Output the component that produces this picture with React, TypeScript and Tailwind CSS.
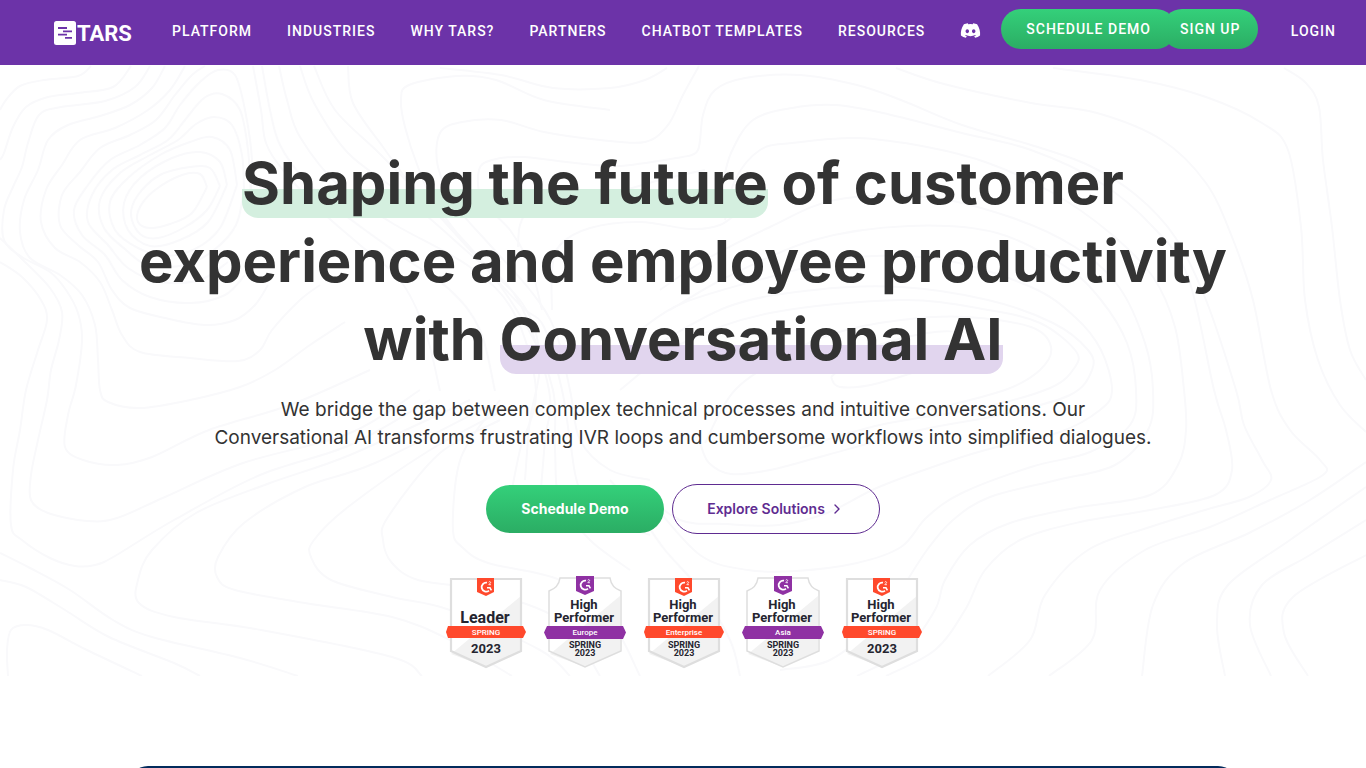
import { FaDiscord } from "react-icons/fa";
import { ChevronRight } from "lucide-react";

const NAV_ITEMS = ["PLATFORM", "INDUSTRIES", "WHY TARS?", "PARTNERS", "CHATBOT TEMPLATES", "RESOURCES"];

/* Contour lines of the hero background, each a list of x,y points. */
const CONTOURS = [
  "91,66 78,76 44,80 20,86 6,100 0,110",
  "131,66 113,87 78,93 48,97 26,107 13,127 4,153 0,160",
  "150,66 135,87 105,101 61,107 39,115 28,143 22,167 13,187 4,210 4,240 22,257 50,272 66,290 78,313 82,340 76,385 68,415 65,447 83,460 117,465 152,457 209,430 290,405 370,370",
  "165,66 152,88 130,105 100,116 68,125 48,140 38,170 24,200 20,232 30,258 60,275 82,295 95,325 98,360 100,390 108,402 140,408 190,400 240,387 275,370 310,345 345,322",
  "185,66 170,90 148,110 115,128 80,140 62,165 46,190 41,222 55,248 80,262 100,282 112,310 122,335 140,352 190,358 238,361 260,350 272,330 300,300 320,285",
  "205,66 192,75 175,95 156,120 130,135 100,148 80,172 62,195 60,225 78,245 98,262 112,290 130,308 165,318 205,325 235,320 255,305 268,285",
  "250,200 252,160 245,110 235,75 218,70 200,82 180,105 165,128 140,145 110,160 88,185 74,210 82,235 105,255 122,280 150,297 190,303 225,295 245,275",
  "251,200 248,150 240,110 222,94 204,98 185,120 168,140 140,155 112,170 92,195 88,222 108,245 128,268 160,282 200,280 228,262",
  "244,190 242,155 232,125 214,117 196,124 178,140 150,155 120,173 100,200 104,228 126,250 148,265 185,265 214,250 236,225 244,190",
  "237,185 230,150 212,137 190,142 160,155 128,178 110,202 115,230 138,248 165,256 195,249 220,228 237,185",
  "227,185 220,162 200,152 172,158 140,178 124,203 128,230 150,246 180,240 208,222 227,185",
  "220,186 210,168 190,167 160,175 138,195 131,215 140,234 158,238 185,227 207,210 220,186",
  "207,187 200,174 182,175 155,190 140,207 138,222 150,228 170,224 192,213 207,187",
  "253,66 261,110 266,143 283,170 320,210 360,245 400,280 425,330 440,391",
  "262,66 270,110 280,145 305,180 345,215 400,255 450,290 480,330 495,391",
  "279,66 287,100 300,137 340,187 392,223 470,267 514,313 536,391 520,450 510,500",
  "300,66 314,103 348,153 400,193 462,247 522,303 540,360 530,420 525,480",
  "314,66 335,110 379,153 418,193 470,250 518,300 549,390 545,440 540,500",
  "348,66 353,103 383,147 418,193 475,253 527,327 553,390 555,450 560,500 590,540 630,570",
  "610,110 544,100 496,80 457,76 409,85 401,100 405,127 418,167 435,203 479,260 522,307 544,327 562,390 570,440 580,490 610,520 650,535",
  "440,68 501,75 553,88 610,88 645,80 667,68",
  "699,66 683,95 668,125 645,142 600,140 544,132 501,120 462,122 440,133 438,167 457,207 490,245 530,290 555,330 570,390 580,440 610,470 650,480",
  "683,157 620,166 575,163 523,157 492,160 479,170 482,200 510,230 530,265 542,310",
  "518,247 520,225 530,208 557,193 610,193 660,180 705,170",
  "552,310 552,270 560,245 590,228 640,222 690,229 720,225 740,210",
  "0,262 22,277 41,300 47,320 38,350 26,390 20,430 13,470 11,525 22,540 50,558 75,566 95,565 115,556 174,520 260,475 350,445 430,400",
  "0,238 25,262 50,288 62,312 59,340 51,370 47,400 38,440 31,475 31,500 48,513 87,521 117,518 165,497 243,463 350,433 420,390",
  "0,553 30,568 70,590 113,620 152,637 240,658 298,676",
  "0,580 26,587 65,610 109,637 174,663 200,676",
  "8,676 7,650 11,630 26,625 48,630 87,650 142,676",
  "470,400 350,455 270,483 196,513 152,550 138,580 139,603 174,617 261,630 392,657 422,676",
  "490,405 375,463 305,487 244,523 218,557 217,577 235,590 305,603 392,617 450,640 512,676",
  "500,412 430,450 348,507 314,540 311,557 331,580 392,597 450,610 540,650 570,676",
  "500,420 440,453 388,517 383,540 392,563 418,580 479,590 560,620 600,676",
  "500,400 470,440 457,473 453,530 462,547 488,563 560,580 610,620 640,676",
  "610,480 640,515 665,550 700,590 730,640 740,676",
  "640,490 680,520 726,524 779,525 827,513 879,487 953,460 997,447 1060,432 1100,410 1112,390 1101,350 1075,317 1031,287 944,260 857,257 770,277 683,303 640,330",
  "650,500 700,555 748,570 796,571 857,563 901,547 927,517 962,493 1031,467 1090,452 1130,425 1136,390 1127,343 1101,300 1066,267 997,233 909,226 814,240 727,277 670,310",
  "780,670 830,660 880,620 901,590 927,550 953,520 990,497 1057,480 1115,465 1148,430 1153,390 1145,343 1119,287 1075,247 1010,217 927,197 835,200 770,227 705,260 660,290",
  "857,676 905,650 935,610 945,580 970,545 1010,523 1075,508 1150,495 1178,465 1186,430 1184,390 1175,327 1153,277 1110,233 1053,193 988,163 927,147 857,138 792,143 760,150 735,180 725,220",
  "886,676 935,650 965,610 985,570 1020,540 1080,522 1150,510 1215,495 1232,470 1226,430 1214,390 1188,277 1153,227 1101,183 1031,150 962,133 883,113 835,105 792,108 753,120 731,153 722,187",
  "988,676 1030,640 1045,595 1088,550 1150,527 1205,510 1249,497 1271,480 1262,460 1244,425 1236,390 1206,300 1175,237 1136,195 1088,165 1031,145 962,125 901,100 857,85 800,75 745,78 715,90 703,115 698,150 683,157",
  "1049,676 1092,640 1100,590 1145,550 1210,527 1270,500 1323,475 1320,460 1290,430 1271,390 1253,300 1232,237 1206,183 1162,140 1097,113 1031,103 944,84 896,68",
  "1142,676 1153,605 1184,563 1249,533 1310,500 1366,462",
  "1225,676 1217,625 1228,585 1290,540 1366,487",
  "1271,676 1250,625 1262,585 1310,555 1366,520",
  "1308,676 1284,633 1293,597 1366,555",
  "1053,68 1140,80 1206,97 1262,123 1288,150 1301,227 1305,300 1318,360 1340,405 1366,432",
  "1284,68 1306,83 1319,107 1323,160 1332,227 1340,300 1350,350 1366,380",
  "640,355 727,307 814,290 901,287 988,300 1053,323 1088,350 1092,370 1070,395 1000,415 920,430 827,455 770,470 731,474 709,463 700,443",
  "620,390 683,343 770,313 901,300 988,310 1040,323 1075,350 1075,367 1050,388 980,408 880,425 800,448",
  "705,443 735,390 790,353 835,333 901,320 966,317 1031,327 1051,347 1040,370 1005,390 930,410",
  "831,377 866,350 927,333 962,335 944,360 879,383 840,387 831,377",
];

function smoothPath(list: string): string {
  const pts = list.split(" ").map((p) => p.split(",").map(Number));
  let d = `M${pts[0][0]} ${pts[0][1]}`;
  for (let i = 0; i < pts.length - 1; i++) {
    const p0 = pts[i - 1] ?? pts[i];
    const p1 = pts[i];
    const p2 = pts[i + 1];
    const p3 = pts[i + 2] ?? p2;
    d += `C${p1[0] + (p2[0] - p0[0]) / 6} ${p1[1] + (p2[1] - p0[1]) / 6} ${p2[0] - (p3[0] - p1[0]) / 6} ${p2[1] - (p3[1] - p1[1]) / 6} ${p2[0]} ${p2[1]}`;
  }
  return d;
}

function Contours() {
  return (
    <svg
      className="pointer-events-none absolute inset-0 h-full w-full"
      viewBox="0 65 1366 611"
      preserveAspectRatio="xMidYMid slice"
      fill="none"
      stroke="#f9f9fb"
      strokeWidth="2"
      aria-hidden="true"
    >
      {CONTOURS.map((line) => (
        <path key={line} d={smoothPath(line)} />
      ))}
    </svg>
  );
}

function Logo() {
  return (
    <a href="#" aria-label="TARS" className="flex items-center">
      <svg width="78" height="26" viewBox="0 0 78 26" fill="none">
        <rect x="0" y="1" width="22" height="24" rx="2.5" fill="#fff" />
        <g stroke="#6c33a8" strokeWidth="1.8">
          <path d="M4 8h9M9 11.3h9M4 14.6h9M11 17.9h7" />
        </g>
        <text x="23" y="21" fill="#fff" fontSize="22" letterSpacing="0" fontWeight="700" fontFamily="'Liberation Sans Narrow', Roboto, sans-serif">
          TARS
        </text>
      </svg>
    </a>
  );
}

function Header() {
  return (
    <header className="flex h-[65px] items-center bg-[#6c33a8] pr-[30px] pb-1 pl-[54px] font-[Roboto,sans-serif] text-sm font-medium tracking-[1px] whitespace-nowrap text-white">
      <div className="pt-1">
        <Logo />
      </div>
      <nav className="ml-10 flex items-center gap-[35px]">
        {NAV_ITEMS.map((item) => (
          <a key={item} href="#">
            {item}
          </a>
        ))}
        <a href="#" aria-label="Discord">
          <FaDiscord size={21} />
        </a>
      </nav>
      <div className="ml-5 flex pb-1">
        <button className="h-10 rounded-full bg-linear-to-b from-[#34d07a] to-[#2bad64] px-[25px]">SCHEDULE DEMO</button>
        <button className="-ml-[14px] h-10 rounded-full bg-linear-to-b from-[#34d07a] to-[#2bad64] px-[18px]">SIGN UP</button>
      </div>
      <a href="#" className="ml-auto">
        LOGIN
      </a>
    </header>
  );
}

type BadgeProps = {
  title: string[];
  band: string;
  foot: string[];
  purple?: boolean;
};

function Badge({ title, band, foot, purple = false }: BadgeProps) {
  const color = purple ? "#8f31a3" : "#ff492c";
  const shield = purple
    ? "M5 15C11 13 15 9 16 2H66C67 9 71 13 77 15V75L41 91L5 75Z"
    : "M6 3H76V75L41 91L6 75Z";
  return (
    <svg
      width="82"
      height="94"
      viewBox="0 0 82 94"
      textAnchor="middle"
      fontFamily="Roboto, sans-serif"
      fontWeight="700"
      fill="#252530"
      role="img"
      aria-label={[...title, band, ...foot].join(" ")}
    >
      <path d={shield} fill="#fff" />
      <path d="M76 20L6 78L41 91L76 75Z" fill="#f2f2f2" />
      <path d={shield} fill="none" stroke="#dedede" strokeWidth={purple ? 1.5 : 2.2} />
      <path d={purple ? "M32 0H50V15L41 19L32 15Z" : "M32 2H49V16L41 20L32 16Z"} fill={color} />
      <g transform={purple ? "translate(41 9)" : "translate(41 11)"} fill="none" stroke="#fff">
        <path d="M1 -4.3A4.5 4.5 0 1 0 3 3.6" strokeWidth="1.8" />
        <path d="M1 0.8H4L5.4 3.4" strokeWidth="1.5" />
        <path d="M2.8 -4.6C3 -6 5 -5.4 4.6 -4.3L2.8 -2.3H5" strokeWidth="0.8" />
      </g>
      {title.length === 1 ? (
        <text x="40" y="47" fontSize="16">
          {title[0]}
        </text>
      ) : (
        title.map((line, i) => (
          <text key={line} x="40" y={33 + i * 13} fontSize="13">
            {line}
          </text>
        ))
      )}
      <path d={purple ? "M3 50H79L82 56.5L79 63H3L0 56.5Z" : "M3 50H78L81 56L78 62H3L1 56Z"} fill={color} />
      <text x="41" y="59" fontSize="8" fontWeight="500" fill="#fff">
        {band}
      </text>
      {foot.length === 1 ? (
        <text x="41" y="77" fontSize="13">
          {foot[0]}
        </text>
      ) : (
        foot.map((line, i) => (
          <text key={line} x="41" y={72 + i * 8} fontSize="9">
            {line}
          </text>
        ))
      )}
    </svg>
  );
}

export default function App() {
  return (
    <div className="min-h-screen bg-white font-[Inter,sans-serif] text-[#333333]">
      <Header />
      <main>
        <section className="relative flex flex-col items-center pt-[79px] pb-[6px] text-center">
          <Contours />
          <h1 className="relative text-[58px] leading-[78px] font-bold">
            <span className="rounded-b-2xl bg-[linear-gradient(transparent_41px,#d4efdf_41px)]">Shaping the future</span> of customer
            <br />
            experience and employee productivity
            <br />
            with <span className="rounded-b-2xl bg-[linear-gradient(transparent_41px,#e1d5ee_41px)]">Conversational AI</span>
          </h1>
          <p className="relative mt-[18px] text-[19px] leading-7">
            We bridge the gap between complex technical processes and intuitive conversations. Our
            <br />
            Conversational AI transforms frustrating IVR loops and cumbersome workflows into simplified dialogues.
          </p>
          <div className="relative mt-8 flex items-center gap-2 text-sm">
            <button className="h-12 w-[178px] rounded-full bg-linear-to-b from-[#34d07a] to-[#2bad64] font-bold text-white">
              Schedule Demo
            </button>
            <button className="flex h-[50px] w-[208px] items-center justify-center gap-1 rounded-full border border-[#5f2c91] font-semibold text-[#5f2c91]">
              Explore Solutions
              <ChevronRight size={16} />
            </button>
          </div>
          <div className="relative mt-[42px] flex gap-[17px] pl-0.5">
            <Badge title={["Leader"]} band="SPRING" foot={["2023"]} />
            <Badge title={["High", "Performer"]} band="Europe" foot={["SPRING", "2023"]} purple />
            <Badge title={["High", "Performer"]} band="Enterprise" foot={["SPRING", "2023"]} />
            <Badge title={["High", "Performer"]} band="Asia" foot={["SPRING", "2023"]} purple />
            <Badge title={["High", "Performer"]} band="SPRING" foot={["2023"]} />
          </div>
        </section>
        <section className="mx-auto mt-[90px] h-[400px] max-w-[1110px] rounded-[20px] bg-[#032b5c]" />
      </main>
    </div>
  );
}
